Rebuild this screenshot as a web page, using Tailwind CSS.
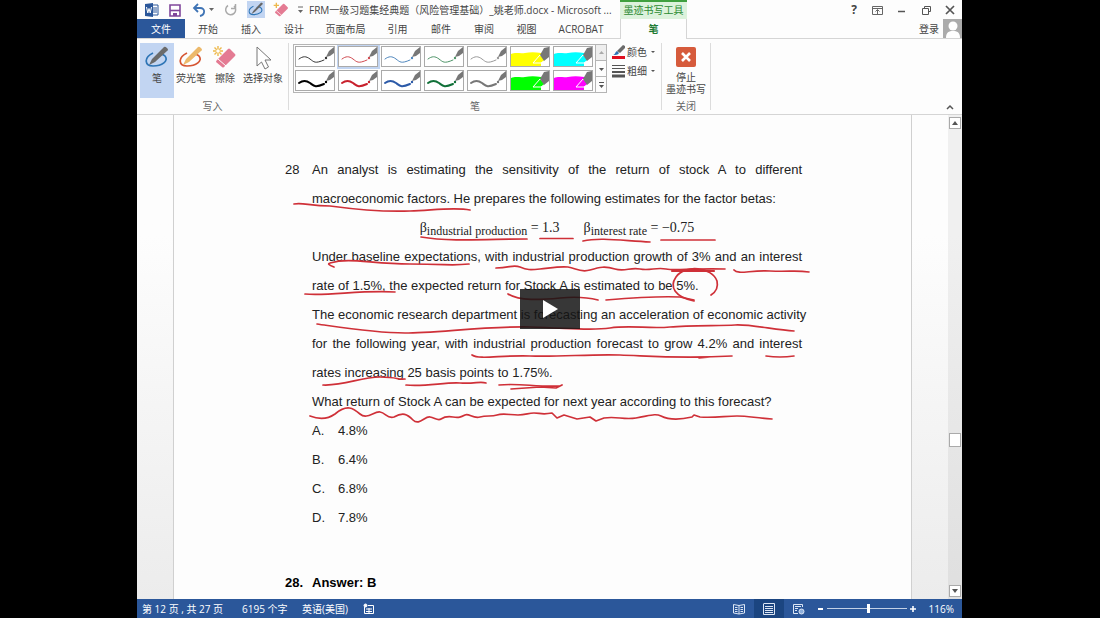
<!DOCTYPE html>
<html lang="zh-CN">
<head>
    <meta charset="UTF-8">
    <meta name="viewport" content="width=device-width, initial-scale=1.0">
    <title>FRM一级习题集经典题 - Microsoft Word</title>
    <script src="https://cdn.jsdelivr.net/npm/@tailwindcss/browser@4"></script>
</head>
<body class="bg-black pl-[137px] pr-[138px] font-['Open_Sans','Noto_Sans_CJK_SC',sans-serif] text-[10px] leading-3 text-[#444]">
    <!-- Shared icon shapes -->
    <svg class="hidden">
        <symbol id="pen-stroke" viewBox="0 0 38 19">
            <path d="M3 12C7 9 10 9 14 12S19 17 28 13" fill="none" stroke="currentColor" stroke-linecap="round"/>
            <circle cx="30" cy="11" r="1.2" fill="currentColor" stroke="none"/>
            <path d="M30 10L33 4L38 0V6L34 9Z" fill="#777" stroke="none"/>
        </symbol>
        <symbol id="marker" viewBox="0 0 38 19">
            <path d="M0 7C5 5 9 7 14 6S24 5 30 6V19H0Z" fill="currentColor"/>
            <path d="M22 16L29 8L34 13L30 16Z" fill="currentColor" stroke="#fff"/>
            <path d="M30 19V17H38V19Z" fill="#fff"/>
            <path d="M29 8L33 1L38 0V10L33 14Z" fill="#777"/>
        </symbol>
        <symbol id="pen-loop" viewBox="0 0 24 24">
            <path d="M8 7C-2 12 0 20 8 20C17 20 24 15 20 10C18 8 15 8 13 9" fill="none" stroke="currentColor" stroke-width="1.7"/>
        </symbol>
        <symbol id="eraser" viewBox="0 0 24 24">
            <path d="M4 14L15 3Q16 2 17 3L22 8Q23 9 22 10L11 21Q10 22 9 21L3 16Q3 15 4 14Z" fill="#e47b93"/>
            <path d="M5 13L13 20" stroke="#fff"/>
        </symbol>
    </svg>

    <div class="flex min-h-screen flex-col bg-[#fdfdfd]">
        <!-- Title bar and tabs -->
        <header>
            <div class="flex h-[19px] items-center">
                <div class="flex w-[172px] shrink-0 items-center pl-2">
                    <svg class="h-4 w-[14px]" viewBox="0 0 14 16"><path d="M6 3h7v10H6z" fill="#fff" stroke="#2b579a"/><path d="M8 6h4M8 8h4M8 10h4" stroke="#2b579a"/><path d="M0 2L8 1V15L0 14Z" fill="#2b579a"/><path d="M1.500 5L2.800 11L4 6.500L5.200 11L6.500 5" fill="none" stroke="#fff"/></svg>
                    <button class="ml-2" aria-label="保存"><svg class="h-4 w-4" viewBox="0 0 16 16"><path d="M3 3H13V14H3Z" fill="#fff" stroke="#80479b" stroke-width="1.600"/><path d="M3 8.500H13" stroke="#80479b" stroke-width="1.600"/><path d="M6 11H10V14H6Z" fill="#80479b"/></svg></button>
                    <button class="ml-2 flex items-center" aria-label="撤消"><svg class="h-4 w-4" viewBox="0 0 16 16" fill="none" stroke="#3f74b5" stroke-width="1.800"><path d="M7 2L3 6L7 10M3 6H9C15 6 14 13 9 14"/></svg><svg class="h-1 w-2" viewBox="0 0 8 4"><path d="M2 0H7L4.500 3Z" fill="#666"/></svg></button>
                    <button class="ml-2" aria-label="重复"><svg class="h-4 w-4" viewBox="0 0 16 16" fill="none" stroke="#aaa" stroke-width="1.500"><path d="M5 3.500A5 5 0 1 0 11 4M8 6.500H12.500V2"/></svg></button>
                    <button class="ml-2 h-[17px] w-[18px] bg-[#c2d5f2]" aria-label="笔"><svg class="h-[17px] w-[18px]" viewBox="-2 -1 28 26"><use href="#pen-loop" width="24" height="24" class="text-[#2e75b6]"/><path d="M5 19L8 14L20 1L23 3L10 16Z" fill="#666"/></svg></button>
                    <button class="ml-2" aria-label="擦除"><svg class="h-4 w-4" viewBox="0 0 24 24"><use href="#eraser" width="24" height="24"/><path d="M5 1V9M1 5H9" stroke="#edb94c" stroke-width="2"/></svg></button>
                    <svg class="ml-2 h-2 w-2" viewBox="0 0 8 8"><path d="M1 1H6" stroke="#666"/><path d="M1 4H6L3.500 7Z" fill="#666"/></svg>
                </div>
                <h1 class="w-[311px] shrink-0 whitespace-nowrap">FRM一级习题集经典题（风险管理基础）_姚老师.docx - Microsoft ...</h1>
                <div class="h-[19px] w-[67px] shrink-0 border-t-2 border-[#3fa03f] bg-[#dcf2dc] text-center leading-4 text-[#2b8a32]">墨迹书写工具</div>
                <div class="ml-auto flex items-center gap-3 pr-[6px]">
                    <button class="w-3 text-xs font-bold leading-4" aria-label="帮助">?</button>
                    <button aria-label="功能区显示选项"><svg class="h-3 w-3" viewBox="0 0 12 12" fill="none" stroke="#666"><path d="M.5 2.500H10.500V10.500H.5ZM1 4.500H10M5.500 10V6M3.500 7.500L5.500 5.500L7.500 7.500"/></svg></button>
                    <button aria-label="最小化"><svg class="h-3 w-3" viewBox="0 0 12 12"><path d="M2 7.500H9" stroke="#555" stroke-width="1.500"/></svg></button>
                    <button aria-label="还原"><svg class="h-3 w-3" viewBox="0 0 12 12" fill="none" stroke="#555"><path d="M2.500 4.500H8.500V10.500H2.500ZM4.500 4V2.500H10.500V7.500H9"/></svg></button>
                    <button aria-label="关闭"><svg class="h-3 w-3" viewBox="0 0 12 12"><path d="M2 2L10 10M10 2L2 10" stroke="#555" stroke-width="1.700"/></svg></button>
                </div>
            </div>
            <nav class="flex h-5 items-stretch border-b border-[#d5d5d5] leading-5">
                <button class="w-12 bg-[#2b579a] text-white">文件</button>
                <button class="w-[46px]">开始</button>
                <button class="w-[40px]">插入</button>
                <button class="w-[46px]">设计</button>
                <button class="w-[57px]">页面布局</button>
                <button class="w-[47px]">引用</button>
                <button class="w-[40px]">邮件</button>
                <button class="w-[46px]">审阅</button>
                <button class="w-[39px]">视图</button>
                <button class="mr-1 w-[70px]">ACROBAT</button>
                <button class="-mb-px w-[67px] border-x border-[#d5d5d5] bg-[#fdfdfd] font-bold text-[#1e7b34]">笔</button>
                <a href="#" class="ml-auto mr-1">登录</a>
                <svg class="h-[19px] w-[19px] bg-[#ababab]" viewBox="0 0 19 19" fill="#fff"><circle cx="10" cy="7" r="4.500"/><path d="M3 19C3 13 6 12 10 12S17 13 17 19Z"/></svg>
            </nav>
        </header>

        <!-- Ribbon -->
        <section class="flex h-[76px] border-b border-[#d5d5d5]">
            <div class="my-1 flex w-[152px] flex-col border-r border-[#dcdcdc]">
                <div class="flex h-[55px] shrink-0 items-start pl-[3px]">
                    <button class="flex h-[55px] w-[34px] flex-col items-center bg-[#c2d5f2] pt-[3px]"><svg class="h-6 w-6" viewBox="0 0 24 24"><use href="#pen-loop" class="text-[#2e75b6]"/><path d="M4 19L7 13L19 1Q20 0 22 2T22 5L10 16Z" fill="#6b6b6b"/></svg><span class="pt-[2px]">笔</span></button>
                    <button class="flex w-[34px] flex-col items-center whitespace-nowrap pt-[3px]"><svg class="h-6 w-6" viewBox="0 0 24 24"><use href="#pen-loop" class="text-[#d65532]"/><path d="M4 19L7 13L19 1Q20 0 22 2T22 5L10 16Z" fill="#ecb96b"/></svg><span class="pt-[2px]">荧光笔</span></button>
                    <button class="flex w-[34px] flex-col items-center pt-[3px]"><svg class="h-6 w-6" viewBox="0 0 24 24"><use href="#eraser"/><path d="M5 0V10M0 5H10M1.500 1.500L8.500 8.500M8.500 1.500L1.500 8.500" stroke="#edb94c" stroke-width="1.400"/><circle cx="5" cy="5" r="1.800" fill="#fff"/></svg><span class="pt-[2px]">擦除</span></button>
                    <button class="flex w-[42px] flex-col items-center whitespace-nowrap pt-[3px]"><svg class="h-6 w-6" viewBox="0 0 24 24"><path d="M6 1V20L10.500 16L14 23L17.500 21L14 14H20Z" fill="#fff" stroke="#777"/></svg><span class="pt-[2px]">选择对象</span></button>
                </div>
                <p class="pt-[2px] text-center text-[#666]">写入</p>
            </div>
            <div class="my-1 flex w-[373px] flex-col border-r border-[#dcdcdc]">
                <div class="flex h-[55px] shrink-0 items-start pl-1 pt-px">
                    <div class="flex h-[49px] border border-[#b5b5b5]">
                        <div class="grid grid-cols-[repeat(7,43px)] grid-rows-2 text-[#333]">
                            <button class="p-[2px]" aria-label="黑色细笔"><svg class="h-[19px] w-[38px] bg-white outline outline-[#aaa]"><use href="#pen-stroke"/></svg></button>
                            <button class="bg-[#c2d5f2] p-[2px] text-[#d04a50]" aria-label="红色细笔"><svg class="h-[19px] w-[38px] bg-white outline outline-[#aaa]"><use href="#pen-stroke"/></svg></button>
                            <button class="p-[2px] text-[#4e86bd]" aria-label="蓝色细笔"><svg class="h-[19px] w-[38px] bg-white outline outline-[#aaa]"><use href="#pen-stroke"/></svg></button>
                            <button class="p-[2px] text-[#4e9468]" aria-label="绿色细笔"><svg class="h-[19px] w-[38px] bg-white outline outline-[#aaa]"><use href="#pen-stroke"/></svg></button>
                            <button class="p-[2px] text-[#999]" aria-label="灰色细笔"><svg class="h-[19px] w-[38px] bg-white outline outline-[#aaa]"><use href="#pen-stroke"/></svg></button>
                            <button class="p-[2px] text-[#ff0]" aria-label="黄色荧光笔"><svg class="h-[19px] w-[38px] bg-white outline outline-[#aaa]"><use href="#marker"/></svg></button>
                            <button class="p-[2px] text-[#0ff]" aria-label="青色荧光笔"><svg class="h-[19px] w-[38px] bg-white outline outline-[#aaa]"><use href="#marker"/></svg></button>
                            <button class="p-[2px] text-black" aria-label="黑色粗笔"><svg class="h-[19px] w-[38px] bg-white stroke-2 outline outline-[#aaa]"><use href="#pen-stroke"/></svg></button>
                            <button class="p-[2px] text-[#c8202c]" aria-label="红色粗笔"><svg class="h-[19px] w-[38px] bg-white stroke-2 outline outline-[#aaa]"><use href="#pen-stroke"/></svg></button>
                            <button class="p-[2px] text-[#2c5aa8]" aria-label="蓝色粗笔"><svg class="h-[19px] w-[38px] bg-white stroke-2 outline outline-[#aaa]"><use href="#pen-stroke"/></svg></button>
                            <button class="p-[2px] text-[#107038]" aria-label="绿色粗笔"><svg class="h-[19px] w-[38px] bg-white stroke-2 outline outline-[#aaa]"><use href="#pen-stroke"/></svg></button>
                            <button class="p-[2px] text-[#777]" aria-label="灰色粗笔"><svg class="h-[19px] w-[38px] bg-white stroke-2 outline outline-[#aaa]"><use href="#pen-stroke"/></svg></button>
                            <button class="p-[2px] text-[#0f0]" aria-label="绿色荧光笔"><svg class="h-[19px] w-[38px] bg-white outline outline-[#aaa]"><use href="#marker"/></svg></button>
                            <button class="p-[2px] text-[#f0f]" aria-label="紫色荧光笔"><svg class="h-[19px] w-[38px] bg-white outline outline-[#aaa]"><use href="#marker"/></svg></button>
                        </div>
                        <div class="flex w-[11px] flex-col divide-y divide-[#b5b5b5] border-l border-[#b5b5b5]">
                            <button class="flex flex-1 items-center justify-center bg-[#eee]" aria-label="向上"><svg class="h-1 w-[5px]" viewBox="0 0 5 4"><path d="M0 3H5L2.500 0Z" fill="#aaa"/></svg></button>
                            <button class="flex flex-1 items-center justify-center" aria-label="向下"><svg class="h-1 w-[5px]" viewBox="0 0 5 4"><path d="M0 1H5L2.500 4Z" fill="#555"/></svg></button>
                            <button class="flex flex-1 items-center justify-center" aria-label="更多"><svg class="h-2 w-[5px]" viewBox="0 0 5 8"><path d="M0 1H5V2H0ZM0 4H5L2.500 7Z" fill="#555"/></svg></button>
                        </div>
                    </div>
                    <div class="flex flex-col gap-1 pl-[5px]">
                        <button class="flex h-[15px] items-center"><svg class="mr-[2px] h-[14px] w-[13px]" viewBox="0 0 13 14"><path d="M0 11H13V14H0Z" fill="#e01020"/><path d="M1 10C3 10 3 7 5 6L7 8C6 10 4 10 1 10Z" fill="#2e75b6"/><path d="M5 6L11 0L13 1V3L8 8Z" fill="#6b6b6b"/></svg>颜色<svg class="ml-1 h-1 w-1" viewBox="0 0 4 4"><path d="M0 1H4L2 3Z" fill="#555"/></svg></button>
                        <button class="flex h-[15px] items-center"><svg class="mr-[2px] h-[14px] w-[13px]" viewBox="0 0 13 14" stroke="#555"><path d="M0 1.500H13M0 4.500H13"/><path d="M0 8H13" stroke-width="2"/><path d="M0 12H13" stroke-width="3"/></svg>粗细<svg class="ml-1 h-1 w-1" viewBox="0 0 4 4"><path d="M0 1H4L2 3Z" fill="#555"/></svg></button>
                    </div>
                </div>
                <p class="pt-[2px] text-center text-[#666]">笔</p>
            </div>
            <div class="my-1 flex w-[49px] flex-col border-r border-[#dcdcdc]">
                <button class="flex h-[55px] shrink-0 flex-col items-center whitespace-nowrap pt-1"><svg class="mb-1 h-5 w-5 shrink-0 rounded-[2px] bg-[#d65b3c]" viewBox="0 0 20 20"><path d="M6 6L14 14M14 6L6 14" stroke="#fff" stroke-width="2.600"/></svg><span>停止</span><span>墨迹书写</span></button>
                <p class="pt-[2px] text-center text-[#666]">关闭</p>
            </div>
            <button class="ml-auto mr-2 self-end pb-[3px]" aria-label="折叠功能区"><svg class="h-2 w-2" viewBox="0 0 8 8"><path d="M1 6L4 3L7 6" fill="none" stroke="#555" stroke-width="1.500"/></svg></button>
        </section>

        <!-- Document -->
        <main class="relative flex flex-1 bg-linear-to-b from-[#fdfdfd] from-25% to-[#ececec]">
            <div class="flex flex-1 justify-center">
                <article class="relative w-[739px] border-x border-[#d0d0d0] bg-[#fdfdfd] pl-[138px] pr-[109px] pt-10 font-['Liberation_Sans',Arial,sans-serif] text-[13px] leading-[29px] text-[#222]">
                    <p class="relative [text-align-last:justify]"><span class="absolute -left-[27px]">28</span>An analyst is estimating the sensitivity of the return of stock A to different</p>
                    <p>macroeconomic factors. He prepares the following estimates for the factor betas:</p>
                    <p class="flex justify-center gap-6 whitespace-nowrap font-['Liberation_Serif',serif] text-sm leading-[29px]"><span>β<sub class="text-xs">industrial production</sub> = 1.3</span><span>β<sub class="text-xs">interest rate</sub> = −0.75</span></p>
                    <p class="[text-align-last:justify]">Under baseline expectations, with industrial production growth of 3% and an interest</p>
                    <p>rate of 1.5%, the expected return for Stock A is estimated to be 5%.</p>
                    <p class="whitespace-nowrap">The economic research department is forecasting an acceleration of economic activity</p>
                    <p class="[text-align-last:justify]">for the following year, with industrial production forecast to grow 4.2% and interest</p>
                    <p>rates increasing 25 basis points to 1.75%.</p>
                    <p>What return of Stock A can be expected for next year according to this forecast?</p>
                    <ol>
                        <li class="flex"><span class="w-[26px]">A.</span>4.8%</li>
                        <li class="flex"><span class="w-[26px]">B.</span>6.4%</li>
                        <li class="flex"><span class="w-[26px]">C.</span>6.8%</li>
                        <li class="flex"><span class="w-[26px]">D.</span>7.8%</li>
                    </ol>
                    <p class="relative mt-9 font-bold text-black"><span class="absolute -left-[27px]">28.</span>Answer: B</p>

                    <!-- Ink annotations -->
                    <svg class="absolute left-0 top-0 h-[483px] w-[737px]" viewBox="174 115 737 483" fill="none" stroke="#cf3038" stroke-width="1.700" stroke-linecap="round" stroke-linejoin="round">
                        <path d="M294 204C302 202 310 206 330 206C360 210 385 212 410 211S455 207 470 210"/>
                        <path d="M421 237C450 242 490 239 527 239M540 238.500H573M583 241C600 237 625 241 650 242M661 240H715"/>
                        <path d="M334 267Q326 264 330 263C350 257 370 264 410 264S450 266 469 264"/>
                        <path d="M496 268C510 268 513 264 520 267S530 270 540 269S560 266 568 267S580 273 590 270S605 266 615 269S630 267 640 269S656 267 666 269S690 268 725 269"/>
                        <path d="M672 271H714" stroke-width="2.200"/>
                        <path d="M734 270C738 275 750 270 770 271S795 270 809 272"/>
                        <path d="M305 294C330 296 360 290 395 292"/>
                        <path d="M508 294C520 301 540 300 560 298S590 298 598 300M606 300C630 298 660 296 680 297L694 300"/>
                        <path d="M694 301C675 297 669 287 676 277C685 264 712 267 717 281Q719 290 711 295"/>
                        <path d="M317 324C345 328 375 333 405 333S490 326 530 327S590 331 610 328S650 329 670 327S720 326 735 325S775 330 794 331"/>
                        <path d="M472 355C480 360 500 355 530 356S590 354 620 355S680 359 732 356M699 358L710 357M766 356Q780 358 794 356"/>
                        <path d="M323 385C345 386 360 377 380 377S395 380 405 379M406 385C425 387 445 382 460 383S480 381 486 383"/>
                        <path d="M499 385C520 383 535 387 560 386M511 389L540 387L556 388L562 385"/>
                        <path d="M310 416C320 420 328 419 335 414C347 404 353 408 360 414S374 411 380 412S387 419 394 417C403 412 407 414 413 420S425 416 430 417S438 421 441 419S447 416 453 417S461 417 465 415S473 419 480 417S491 417 497 415S510 415 518 415S528 413 534 413S542 415 552 413L557 418L564 415L577 419L590 417L596 421L604 418C617 416 623 420 636 418S655 413 661 416S675 421 692 417L694 415L700 417C715 418 725 416 737 416S755 418 772 419"/>
                    </svg>
                </article>
            </div>
            <div class="flex w-[14px] flex-col items-center bg-black/5 py-[2px]">
                <button class="flex h-3 w-3 items-center justify-center border border-[#aaa] bg-white" aria-label="向上滚动"><svg class="h-1 w-[6px]" viewBox="0 0 6 4"><path d="M0 4H6L3 0Z" fill="#555"/></svg></button>
                <div class="mt-[304px] h-[14px] w-3 border border-[#aaa] bg-white"></div>
                <button class="mt-auto flex h-3 w-3 items-center justify-center border border-[#aaa] bg-white" aria-label="向下滚动"><svg class="h-1 w-[6px]" viewBox="0 0 6 4"><path d="M0 0H6L3 4Z" fill="#555"/></svg></button>
            </div>
            <!-- Video play overlay -->
            <button class="absolute left-1/2 top-[174px] flex h-10 w-[60px] -translate-x-1/2 items-center justify-center bg-[#141414]/85" aria-label="播放"><svg class="h-5 w-4" viewBox="0 0 16 20"><path d="M1 1L16 10L1 19Z" fill="#fff"/></svg></button>
        </main>

        <!-- Status bar -->
        <footer class="flex h-[19px] items-center bg-[#2b579a] pl-[5px] pr-2 text-white">
            <span class="w-[100px]">第 12 页 , 共 27 页</span>
            <span class="w-[60px]">6195 个字</span>
            <span class="w-[61px]">英语(美国)</span>
            <svg class="h-3 w-3" viewBox="0 0 12 12" fill="none" stroke="#fff"><path d="M1.500 4V10.500H10.500V2.500H5M3 6H9M3 8.500H9M6 5V10"/><circle cx="2.500" cy="2.500" r="1.500" fill="#fff"/></svg>
            <div class="ml-auto flex h-full items-center">
                <button class="flex h-full w-[30px] items-center justify-center" aria-label="阅读视图"><svg class="h-3 w-3" viewBox="0 0 12 12" fill="none" stroke="#dce6f5"><path d="M.5 1.500L6 2.500L11.500 1.500V10L6 11L.5 10ZM6 2V11M2 4.500H4.500M2 6.500H4.500M2 8.500H4.500M7.500 4.500H10M7.500 6.500H10M7.500 8.500H10"/></svg></button>
                <button class="flex h-full w-[30px] items-center justify-center bg-[#1b4580]" aria-label="页面视图"><svg class="h-3 w-3" viewBox="0 0 12 12" fill="none" stroke="#dce6f5"><path d="M.5 1V11.500H11.500V.5H.5M2 3.500H10M2 5.500H10M2 7.500H10M2 9.500H10"/></svg></button>
                <button class="flex h-full w-[30px] items-center justify-center" aria-label="Web 版式视图"><svg class="h-3 w-3" viewBox="0 0 12 12" fill="none" stroke="#dce6f5"><path d="M5 10.500H.5V1.500H9.500V4M2 3.500H8M2 5.500H5M2 7.500H4"/><circle cx="8.500" cy="8.500" r="2.500" fill="#8fb0dc"/></svg></button>
                <button class="ml-[3px] w-2" aria-label="缩小"><svg class="h-2 w-2" viewBox="0 0 8 8"><path d="M1 4H6" stroke="#fff" stroke-width="2"/></svg></button>
                <input type="range" min="0" max="100" value="52" aria-label="缩放" class="mx-[2px] h-3 w-20 appearance-none bg-linear-to-r from-[#c3d1e6] to-[#c3d1e6] bg-[length:100%_1px] bg-center bg-no-repeat [&::-webkit-slider-thumb]:h-[9px] [&::-webkit-slider-thumb]:w-[3px] [&::-webkit-slider-thumb]:appearance-none [&::-webkit-slider-thumb]:bg-white">
                <button class="w-2" aria-label="放大"><svg class="h-2 w-2" viewBox="0 0 8 8"><path d="M1 4H7M4 1V7" stroke="#fff" stroke-width="1.600"/></svg></button>
                <span class="w-[37px] text-right">116%</span>
            </div>
        </footer>
    </div>
</body>
</html>
